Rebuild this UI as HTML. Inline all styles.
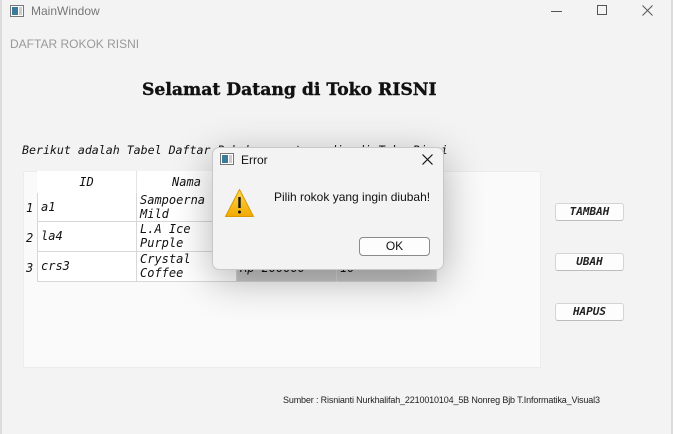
<!DOCTYPE html>
<html><head><meta charset="utf-8"><style>
*{margin:0;padding:0;box-sizing:border-box}
body{width:673px;height:434px;background:#f3f3f3;position:relative;overflow:hidden;font-family:"Liberation Sans",sans-serif}
.abs{position:absolute}
.mono{font-family:"DejaVu Sans Mono","Liberation Mono",monospace;font-style:italic;font-size:12px;color:#111}
.cell{position:absolute;border-right:1px solid #d8d8d8;border-bottom:1px solid #d8d8d8;background:#fff;padding-left:3px;line-height:14px}
.hdr{position:absolute;background:#fff;border-right:1px solid #e4e4e4;text-align:center;line-height:22px}
.btn{position:absolute;left:555px;width:69px;height:18px;background:#fdfdfd;border:1px solid #d4d4d4;border-bottom-color:#bcbcbc;border-radius:3px;text-align:center;line-height:16px;font-family:"DejaVu Sans Mono",monospace;font-style:italic;font-size:11px;font-weight:bold;color:#222}
</style></head><body>
<div class="abs" style="left:0;top:0;width:2px;height:434px;background:#dcdcdc"></div>
<div class="abs" style="left:671px;top:0;width:2px;height:434px;background:#dcdcdc"></div>
<svg class="abs" style="left:10px;top:5px" width="14" height="12"><rect x="0.5" y="0.5" width="13" height="11" fill="#fff" stroke="#777"/><rect x="2" y="2" width="6" height="8" fill="#3a7a9a"/><rect x="9" y="2" width="3" height="8" fill="#ccc"/></svg>
<div class="abs" style="left:31px;top:4px;font-size:12px;color:#777">MainWindow</div>
<div class="abs" style="left:551px;top:11px;width:11px;height:1px;background:#555"></div>
<div class="abs" style="left:597px;top:5px;width:10px;height:10px;border:1px solid #555"></div>
<svg class="abs" style="left:642px;top:5px" width="11" height="11"><path d="M0.5 0.5L10.5 10.5M10.5 0.5L0.5 10.5" stroke="#555" stroke-width="1"/></svg>
<div class="abs" style="left:10px;top:37px;font-size:12px;color:#999">DAFTAR ROKOK RISNI</div>
<div class="abs" style="left:142px;top:80px;font-family:'DejaVu Serif','Liberation Serif',serif;font-weight:bold;font-size:17.2px;color:#111;-webkit-text-stroke:0.4px #111">Selamat Datang di Toko RISNI</div>
<div class="abs mono" style="left:22px;top:143px;font-size:11.6px">Berikut adalah Tabel Daftar Rokok yang tersedia di Toko Risni</div>
<div class="abs" style="left:23px;top:171px;width:518px;height:197px;background:#fafafa;border:1px solid #ececec"></div>
<div class="mono">
<div class="hdr" style="left:37px;top:171px;width:100px;height:22px">ID</div>
<div class="hdr" style="left:137px;top:171px;width:100px;height:22px">Nama</div>
<div class="hdr" style="left:237px;top:171px;width:100px;height:22px">Harga</div>
<div class="hdr" style="left:337px;top:171px;width:100px;height:22px">Stok</div>
<div class="abs" style="left:26px;top:201px">1</div>
<div class="abs" style="left:26px;top:231px">2</div>
<div class="abs" style="left:26px;top:261px">3</div>
<div class="cell" style="left:37px;top:193px;width:100px;height:29px;padding-top:7px;border-left:1px solid #d8d8d8">a1</div>
<div class="cell" style="left:137px;top:193px;width:100px;height:29px">Sampoerna<br>Mild</div>
<div class="cell" style="left:237px;top:193px;width:100px;height:29px"></div>
<div class="cell" style="left:337px;top:193px;width:100px;height:29px"></div>
<div class="cell" style="left:37px;top:222px;width:100px;height:30px;padding-top:7px;border-left:1px solid #d8d8d8">la4</div>
<div class="cell" style="left:137px;top:222px;width:100px;height:30px">L.A Ice<br>Purple</div>
<div class="cell" style="left:237px;top:222px;width:100px;height:30px"></div>
<div class="cell" style="left:337px;top:222px;width:100px;height:30px"></div>
<div class="cell" style="left:37px;top:252px;width:100px;height:30px;padding-top:7px;border-left:1px solid #d8d8d8">crs3</div>
<div class="cell" style="left:137px;top:252px;width:100px;height:30px">Crystal<br>Coffee</div>
<div class="cell" style="left:237px;top:252px;width:100px;height:30px;background:#c9c9c9;padding-top:9px">Rp 200000</div>
<div class="cell" style="left:337px;top:252px;width:100px;height:30px;background:#c9c9c9;padding-top:9px">10</div>
</div>
<div class="btn" style="top:203px">TAMBAH</div>
<div class="btn" style="top:253px">UBAH</div>
<div class="btn" style="top:303px">HAPUS</div>
<div class="abs" style="left:283px;top:395px;font-size:9px;color:#222;letter-spacing:-0.15px">Sumber : Risnianti Nurkhalifah_2210010104_5B Nonreg Bjb T.Informatika_Visual3</div>
<div class="abs" style="left:212px;top:147px;width:232px;height:123px;background:#f3f3f3;border:1px solid #c8c8c8;border-radius:7px;box-shadow:0 10px 40px rgba(0,0,0,0.3)"></div>
<svg class="abs" style="left:220px;top:153px" width="14" height="12"><rect x="0.5" y="0.5" width="13" height="11" fill="#fff" stroke="#777"/><rect x="2" y="2" width="6" height="8" fill="#3a7a9a"/><rect x="9" y="2" width="3" height="8" fill="#ccc"/></svg>
<div class="abs" style="left:241px;top:153px;font-size:12px;color:#111">Error</div>
<svg class="abs" style="left:422px;top:154px" width="11" height="11"><path d="M0.5 0.5L10.5 10.5M10.5 0.5L0.5 10.5" stroke="#111" stroke-width="1.2"/></svg>
<svg class="abs" style="left:224px;top:188px" width="31" height="30"><defs><linearGradient id="g" x1="0" y1="0" x2="0" y2="1"><stop offset="0" stop-color="#ffd84a"/><stop offset="1" stop-color="#f2a900"/></linearGradient></defs><path d="M15.5 1.5L29.5 28.5H1.5Z" fill="url(#g)" stroke="#d99a00" stroke-linejoin="round"/><rect x="14.3" y="9" width="2.4" height="11" fill="#111"/><circle cx="15.5" cy="24" r="1.5" fill="#111"/></svg>
<div class="abs" style="left:274px;top:190px;font-size:12px;color:#111">Pilih rokok yang ingin diubah!</div>
<div class="abs" style="left:359px;top:237px;width:71px;height:19px;background:#fdfdfd;border:1px solid #8a8a8a;border-radius:4px;text-align:center;line-height:17px;font-size:12px;color:#111">OK</div>
</body></html>
